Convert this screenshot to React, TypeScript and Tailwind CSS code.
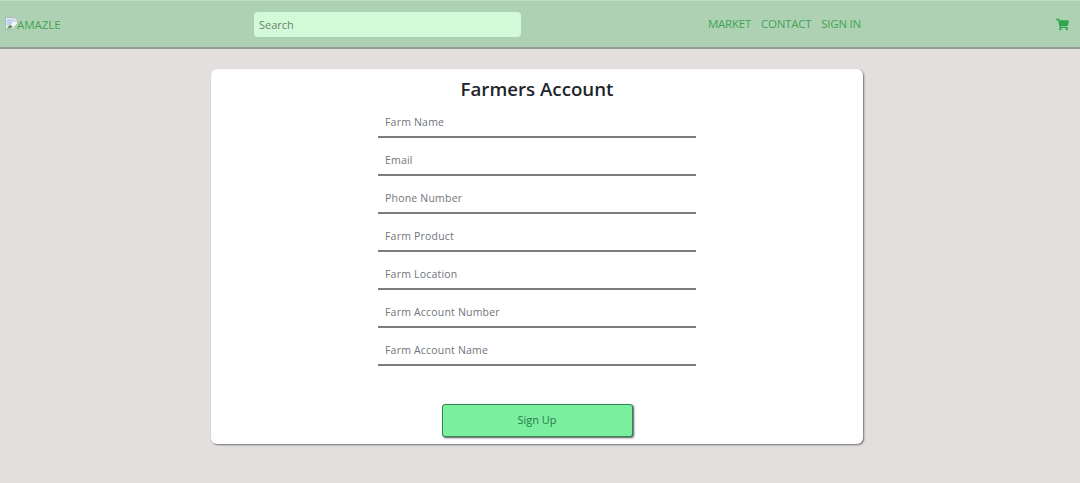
import { FaShoppingCart } from "react-icons/fa";

const fields = [
  "Farm Name",
  "Email",
  "Phone Number",
  "Farm Product",
  "Farm Location",
  "Farm Account Number",
  "Farm Account Name",
];

function BrokenImage() {
  return (
    <svg width="13" height="13" viewBox="0 0 16 16" className="shrink-0 -mt-[2px]">
      <path d="M0.5 0.5H11L15.5 5V8L9 15.5H0.5Z" fill="#f4f6f8" stroke="#a3a8ad" />
      <path d="M11 0.5V5H15.5" fill="#fff" stroke="#a3a8ad" />
      <path d="M2 2H9.5V7L6 10L2 11Z" fill="#bcd3ee" />
      <path d="M2 14L6 9.5L9.5 11.5L7.5 14Z" fill="#5a9c55" />
    </svg>
  );
}

export default function App() {
  return (
    <div className="min-h-[483px] bg-[#e3dfde] font-['Open_Sans','Noto_Sans',sans-serif] overflow-hidden">
      <header className="h-[49px] flex items-center bg-[#afd1b3] border-t border-t-[#c3dcc6] border-b-2 border-b-[#949f96] pl-[5px] pr-[11px]">
        <div className="w-[249px] flex items-center text-[11.5px] tracking-[-0.05px] text-[#3fa554]">
          <BrokenImage />
          <span className="-ml-[1px] mt-[1px]">AMAZLE</span>
        </div>
        <input
          placeholder="Search"
          className="w-[267px] h-[25px] rounded-[4px] bg-[#d2fad7] px-[5px] text-[11px] outline-none placeholder:text-[#6c7f70]"
        />
        <nav className="ml-[187px] flex gap-[10px] text-[11.5px] tracking-[-0.25px] text-[#3fa554]">
          <span>MARKET</span>
          <span>CONTACT</span>
          <span>SIGN IN</span>
        </nav>
        <FaShoppingCart className="ml-auto text-[#2fa64e] text-[13px]" />
      </header>
      <main className="ml-[211px] mt-[20px] w-[652px] h-[375px] bg-white rounded-[6px] shadow-[1px_1px_2px_#6f6f6f] flex flex-col items-center">
        <h1 className="mt-[6px] text-[18.7px] leading-[27px] font-semibold text-[#212529]">Farmers Account</h1>
        <div className="flex flex-col gap-[2px] w-[318px]">
          {fields.map((f) => (
            <input
              key={f}
              placeholder={f}
              className="h-[36px] px-[7px] pt-[5px] border-b-2 border-b-[#7b7b7b] text-[10.5px] tracking-[0.2px] outline-none placeholder:text-[#6f757b]"
            />
          ))}
        </div>
        <button className="mt-[38px] w-[191px] h-[33px] rounded-[3px] bg-[#7aef9f] border border-[#2f8550] shadow-[1px_1px_2px_#555] text-[11px] text-[#2a7a48]">
          Sign Up
        </button>
      </main>
    </div>
  );
}
